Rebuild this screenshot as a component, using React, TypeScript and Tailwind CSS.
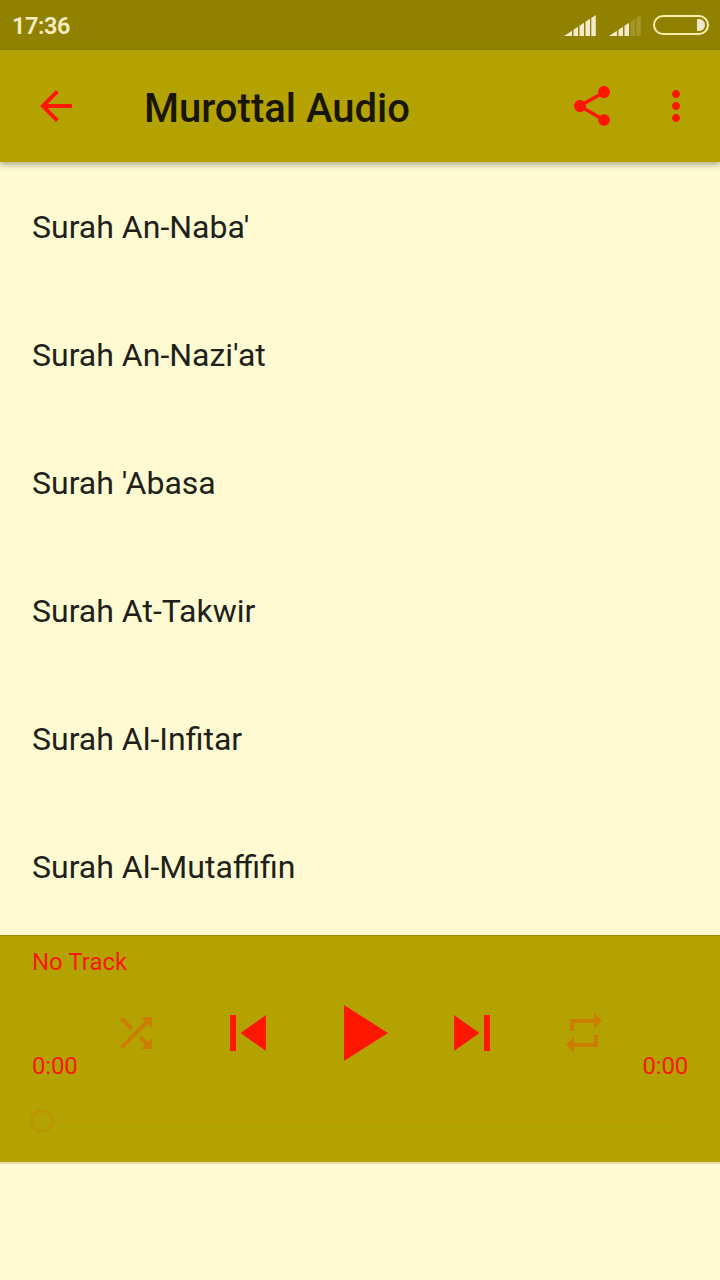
import React from 'react';

const surahs = [
    "Surah An-Naba'",
    "Surah An-Nazi'at",
    "Surah 'Abasa",
    'Surah At-Takwir',
    'Surah Al-Infitar',
    'Surah Al-Mutaffifin',
];

interface IconProps {
    path: string;
    className?: string;
}

const Icon = ({ path, className = 'size-12' }: IconProps) => (
    <svg viewBox="0 0 24 24" fill="currentColor" className={className}>
        <path d={path} />
    </svg>
);

const icons = {
    back: 'M20 11H7.83l5.59-5.59L12 4l-8 8 8 8 1.41-1.41L7.83 13H20v-2z',
    share: 'M18 16.08c-.76 0-1.44.3-1.96.77L8.91 12.7c.05-.23.09-.46.09-.7s-.04-.47-.09-.7l7.05-4.11c.54.5 1.25.81 2.04.81 1.66 0 3-1.34 3-3s-1.34-3-3-3-3 1.34-3 3c0 .24.04.47.09.7L8.04 9.81C7.5 9.31 6.79 9 6 9c-1.66 0-3 1.34-3 3s1.34 3 3 3c.79 0 1.5-.31 2.04-.81l7.12 4.16c-.05.21-.08.43-.08.65 0 1.61 1.31 2.92 2.92 2.92s2.92-1.31 2.92-2.92-1.31-2.92-2.92-2.92z',
    more: 'M12 8c1.1 0 2-.9 2-2s-.9-2-2-2-2 .9-2 2 .9 2 2 2zm0 2c-1.1 0-2 .9-2 2s.9 2 2 2 2-.9 2-2-.9-2-2-2zm0 6c-1.1 0-2 .9-2 2s.9 2 2 2 2-.9 2-2-.9-2-2-2z',
    shuffle: 'M10.59 9.17L5.41 4 4 5.41l5.17 5.17 1.42-1.41zM14.5 4l2.04 2.04L4 18.59 5.41 20 17.96 7.46 20 9.5V4h-5.5zm.33 9.41l-1.41 1.41 3.13 3.13L14.5 20H20v-5.5l-2.04 2.04-3.13-3.13z',
    prev: 'M6 6h2v12H6zm3.5 6l8.5 6V6z',
    play: 'M8 5v14l11-7z',
    next: 'M6 18l8.5-6L6 6v12zM16 6v12h2V6h-2z',
    repeat: 'M7 7h10v3l4-4-4-4v3H5v6h2V7zm10 10H7v-3l-4 4 4 4v-3h12v-6h-2v4z',
};

const bars = [
    'M0 22L8 16.7V22z',
    'M9.5 15.7L14 12.8V22H9.5z',
    'M15.5 11.8L20 8.8V22h-4.5z',
    'M21.5 7.8L26 4.8V22h-4.5z',
    'M27.3 4L31.8 1V22h-4.5z',
];

// Slanted bars, the ones above `level` are dimmed
const Signal = ({ level }: { level: number }) => (
    <svg width="32" height="22" viewBox="0 0 32 22" fill="#f4e9c8">
        {bars.map((bar, i) => (
            <path key={bar} d={bar} opacity={i < level ? 1 : 0.2} />
        ))}
    </svg>
);

const StatusBar = () => (
    <div className="flex h-[50px] items-center bg-[#908200] pl-3 pr-[11px]">
        <span className="flex-1 pt-px text-[23.5px] leading-7 font-semibold tracking-[-0.4px] text-[#f7edc4]">17:36</span>
        <div className="flex items-center">
            <Signal level={5} />
            <div className="ml-[13px]">
                <Signal level={3} />
            </div>
            <svg width="56" height="20" viewBox="0 0 56 20" className="ml-3">
                <rect x="1" y="1" width="54" height="18" rx="9" fill="none" stroke="#fbeea8" strokeWidth="2" />
                <path d="M44 4h2a6 6 0 0 1 0 12h-2z" fill="#f0e6cc" />
            </svg>
        </div>
    </div>
);

const Toolbar = () => (
    <header className="relative flex h-28 items-center bg-[#b4a200] px-8 text-[#ff1700] shadow-[0_3px_6px_rgba(0,0,0,0.3)]">
        <Icon path={icons.back} />
        <h1 className="ml-16 flex-1 pt-1.5 text-[40px] leading-[48px] font-medium text-[#191600]">Murottal Audio</h1>
        <Icon path={icons.share} />
        <Icon path={icons.more} className="-mr-3 ml-9 size-12" />
    </header>
);

const Player = () => (
    <footer className="h-[229px] border-t border-b-2 border-t-[#978800] border-b-[#ead9a4] bg-[#b4a200] bg-clip-padding px-8 text-2xl leading-7 text-[#f51a02]">
        <div className="pt-3">No Track</div>
        <div className="mt-[9px] flex h-24 items-end">
            <span className="w-12 pb-px tracking-[-0.2px]">0:00</span>
            <div className="grid h-24 flex-1 grid-cols-5 place-items-center text-[#ff1700]">
                <Icon path={icons.shuffle} className="size-12 text-[#cb7d00]" />
                <Icon path={icons.prev} className="size-18" />
                <Icon path={icons.play} className="size-24" />
                <Icon path={icons.next} className="size-18" />
                <Icon path={icons.repeat} className="size-12 text-[#cb7d00]" />
            </div>
            <span className="w-12 pb-px text-right tracking-[-0.2px]">0:00</span>
        </div>
        <div className="-ml-0.5 mt-7 flex items-center pr-2">
            <div className="size-6 rounded-full border-3 border-[#ba9600]" />
            <div className="ml-0.5 h-0.5 flex-1 bg-[#b89c00]" />
        </div>
    </footer>
);

export default function App() {
    return (
        <div className="flex h-[1280px] w-[720px] flex-col overflow-hidden bg-[#fffad2] font-[Roboto,sans-serif]">
            <StatusBar />
            <Toolbar />
            <ul className="h-[773px] overflow-hidden text-[32px] leading-[38px] text-[#211f19]">
                {surahs.map((name) => (
                    <li key={name} className="flex h-32 items-center px-8 pt-0.5">
                        {name}
                    </li>
                ))}
            </ul>
            <Player />
        </div>
    );
}
